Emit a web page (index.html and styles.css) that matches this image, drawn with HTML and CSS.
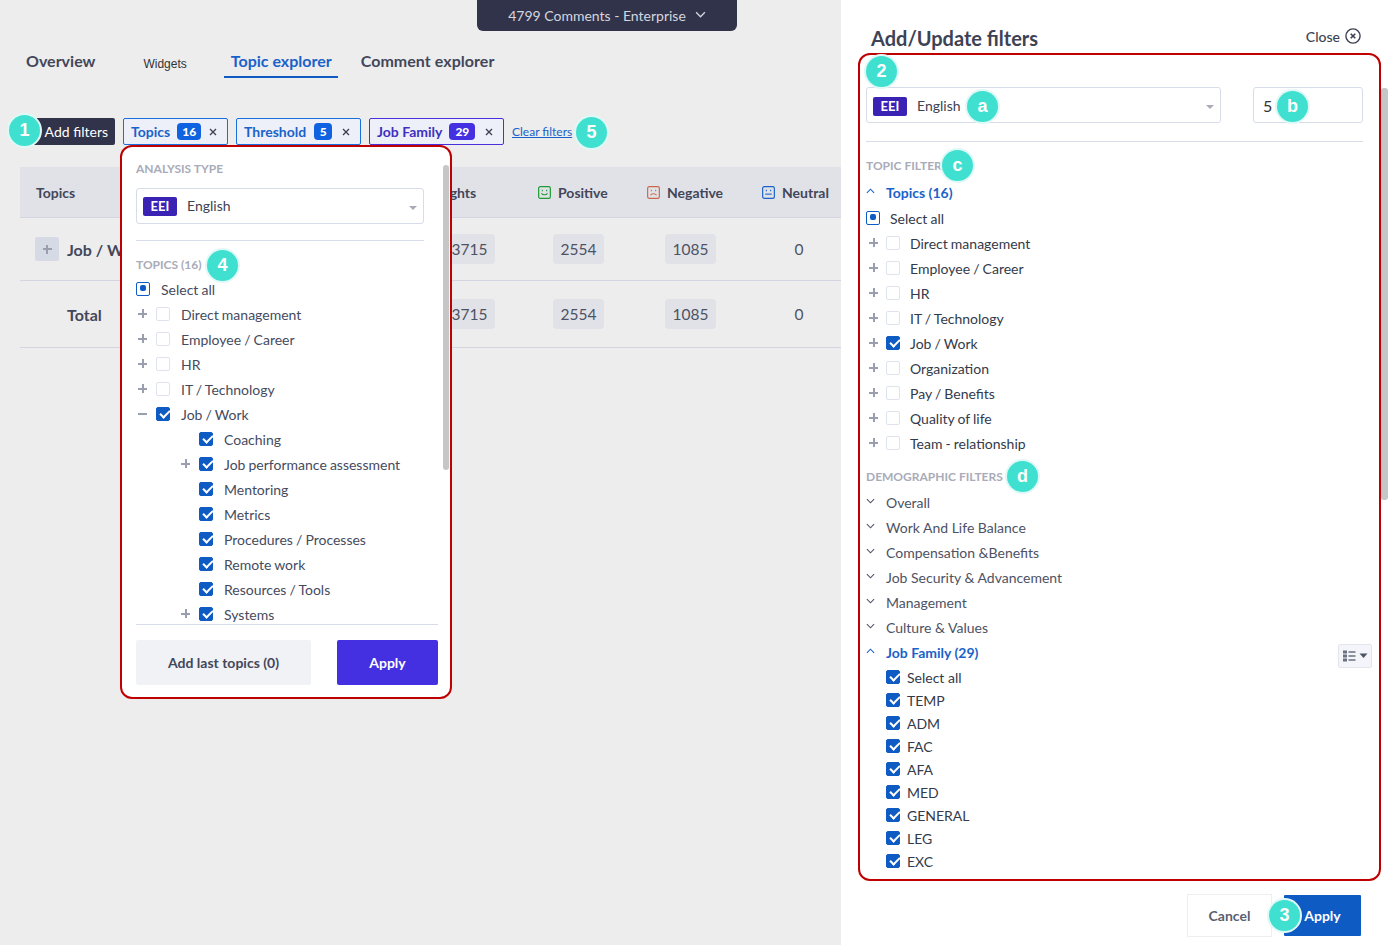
FILE: index.html
```html
<!DOCTYPE html>
<html lang="en">
<head>
<meta charset="utf-8">
<title>Topic explorer</title>
<link rel="stylesheet" href="styles.css">
</head>
<body>
<svg class="defs" width="0" height="0" aria-hidden="true">
  <symbol id="chev-up" viewBox="0 0 10 6"><path d="M1 5l4-4 4 4" fill="none" stroke="currentColor" stroke-width="1.2"/></symbol>
  <symbol id="chev-down" viewBox="0 0 10 6"><path d="M1 1l4 4 4-4" fill="none" stroke="currentColor" stroke-width="1.2"/></symbol>
  <symbol id="x" viewBox="0 0 8 8"><path d="M1 1l6 6M7 1L1 7" fill="none" stroke="currentColor" stroke-width="1.3"/></symbol>
</svg>
<div class="app">
  <main class="left">
    <div class="pill">4799 Comments - Enterprise <svg class="pill-chev"><use href="#chev-down"/></svg></div>
    <nav class="tabs">
      <a class="tab tab-overview">Overview</a>
      <a class="tab tab-widgets">Widgets</a>
      <a class="tab tab-active">Topic explorer</a>
      <a class="tab tab-comment">Comment explorer</a>
    </nav>
    <div class="filters">
      <button class="add-filters">Add filters</button>
      <span class="chip chip-topics">Topics <b class="count">16</b><svg class="chip-x"><use href="#x"/></svg></span>
      <span class="chip chip-threshold">Threshold <b class="count">5</b><svg class="chip-x"><use href="#x"/></svg></span>
      <span class="chip chip-family">Job Family <b class="count">29</b><svg class="chip-x"><use href="#x"/></svg></span>
      <a class="clear">Clear filters</a>
    </div>
    <div class="table">
      <div class="tr th">
        <div class="td td-first">Topics</div>
        <div class="td td-ins">Insights</div>
        <div class="td td-pos">
          <svg class="face" viewBox="0 0 12 12"><rect x=".6" y=".6" width="10.8" height="10.8" rx="1.5" fill="none" stroke="#1f9a35" stroke-width="1.1"/><path d="M4 3.5v1.3M8 3.5v1.3" stroke="#1f9a35"/><path d="M3.2 6.6c1 2 4.6 2 5.6 0" fill="none" stroke="#1f9a35"/></svg>Positive</div>
        <div class="td td-neg">
          <svg class="face" viewBox="0 0 12 12"><rect x=".6" y=".6" width="10.8" height="10.8" rx="1.5" fill="none" stroke="#c9694a" stroke-width="1.1"/><path d="M4 3.5v1.3M8 3.5v1.3" stroke="#c9694a"/><path d="M3.2 8.6c1-2 4.6-2 5.6 0" fill="none" stroke="#c9694a"/></svg>Negative</div>
        <div class="td td-neu">
          <svg class="face" viewBox="0 0 12 12"><rect x=".6" y=".6" width="10.8" height="10.8" rx="1.5" fill="none" stroke="#1a62c9" stroke-width="1.1"/><path d="M4 3.5v1.3M8 3.5v1.3" stroke="#1a62c9"/><path d="M3 7.5h6" stroke="#1a62c9"/></svg>Neutral</div>
      </div>
      <div class="tr row-a">
        <div class="td td-first name"><span class="expand-box"><i class="plus"></i></span>Job / Work</div>
        <div class="td td-num"><span class="val">3715</span></div>
        <div class="td td-num"><span class="val">2554</span></div>
        <div class="td td-num"><span class="val">1085</span></div>
        <div class="td td-num td-zero">0</div>
      </div>
      <div class="tr row-b">
        <div class="td td-first name name-total">Total</div>
        <div class="td td-num"><span class="val">3715</span></div>
        <div class="td td-num"><span class="val">2554</span></div>
        <div class="td td-num"><span class="val">1085</span></div>
        <div class="td td-num td-zero">0</div>
      </div>
    </div>

    <section class="popover">
      <div class="caption cap-first">ANALYSIS TYPE</div>
      <div class="select select-pop"><span class="eei">EEI</span>English<i class="caret"></i></div>
      <hr class="rule rule-pop">
      <div class="caption cap-topics">TOPICS (16)</div>
      <div class="tree">
        <div class="row row-all"><i class="cb mixed"></i>Select all</div>
        <div class="row"><i class="plus"></i><i class="cb"></i>Direct management</div>
        <div class="row"><i class="plus"></i><i class="cb"></i>Employee / Career</div>
        <div class="row"><i class="plus"></i><i class="cb"></i>HR</div>
        <div class="row"><i class="plus"></i><i class="cb"></i>IT / Technology</div>
        <div class="row"><i class="plus minus"></i><i class="cb on"></i>Job / Work</div>
        <div class="row sub"><i class="plus none"></i><i class="cb on"></i>Coaching</div>
        <div class="row sub"><i class="plus"></i><i class="cb on"></i>Job performance assessment</div>
        <div class="row sub"><i class="plus none"></i><i class="cb on"></i>Mentoring</div>
        <div class="row sub"><i class="plus none"></i><i class="cb on"></i>Metrics</div>
        <div class="row sub"><i class="plus none"></i><i class="cb on"></i>Procedures / Processes</div>
        <div class="row sub"><i class="plus none"></i><i class="cb on"></i>Remote work</div>
        <div class="row sub"><i class="plus none"></i><i class="cb on"></i>Resources / Tools</div>
        <div class="row sub"><i class="plus"></i><i class="cb on"></i>Systems</div>
      </div>
      <div class="pop-actions">
        <button class="btn-last">Add last topics (0)</button>
        <button class="btn-apply-pop">Apply</button>
      </div>
      <i class="thumb thumb-pop"></i>
    </section>

    <span class="badge b-1">1</span>
    <span class="badge b-4">4</span>
    <span class="badge b-5">5</span>
  </main>

  <aside class="panel">
    <header class="panel-head">
      <h1>Add/Update filters</h1>
      <a class="close">Close
        <svg class="close-ic" viewBox="0 0 14 14"><circle cx="7" cy="7" r="6.2" fill="none" stroke="#3b3f52" stroke-width="1.2"/><path d="M5 5l4 4M9 5l-4 4" stroke="#3b3f52" stroke-width="1.4"/></svg>
      </a>
    </header>
    <section class="box">
      <div class="box-top">
        <div class="select select-panel"><span class="eei">EEI</span>English<i class="caret"></i></div>
        <div class="num-input">5</div>
      </div>
      <hr class="rule rule-panel">
      <div class="caption cap-tf">TOPIC FILTER</div>
      <div class="acc open"><svg class="chev"><use href="#chev-up"/></svg>Topics (16)</div>
      <div class="tree-p">
        <div class="row row-all"><i class="cb mixed"></i>Select all</div>
        <div class="row"><i class="plus"></i><i class="cb"></i>Direct management</div>
        <div class="row"><i class="plus"></i><i class="cb"></i>Employee / Career</div>
        <div class="row"><i class="plus"></i><i class="cb"></i>HR</div>
        <div class="row"><i class="plus"></i><i class="cb"></i>IT / Technology</div>
        <div class="row"><i class="plus"></i><i class="cb on"></i>Job / Work</div>
        <div class="row"><i class="plus"></i><i class="cb"></i>Organization</div>
        <div class="row"><i class="plus"></i><i class="cb"></i>Pay / Benefits</div>
        <div class="row"><i class="plus"></i><i class="cb"></i>Quality of life</div>
        <div class="row"><i class="plus"></i><i class="cb"></i>Team - relationship</div>
      </div>
      <div class="caption cap-df">DEMOGRAPHIC FILTERS</div>
      <div class="acc"><svg class="chev"><use href="#chev-down"/></svg>Overall</div>
      <div class="acc"><svg class="chev"><use href="#chev-down"/></svg>Work And Life Balance</div>
      <div class="acc"><svg class="chev"><use href="#chev-down"/></svg>Compensation &amp;Benefits</div>
      <div class="acc"><svg class="chev"><use href="#chev-down"/></svg>Job Security &amp; Advancement</div>
      <div class="acc"><svg class="chev"><use href="#chev-down"/></svg>Management</div>
      <div class="acc"><svg class="chev"><use href="#chev-down"/></svg>Culture &amp; Values</div>
      <div class="acc open"><svg class="chev"><use href="#chev-up"/></svg>Job Family (29)
        <span class="view-btn">
          <svg class="view-ic" viewBox="0 0 25 12"><path d="M0 .5h4v3H0zM0 4.500h4v3H0zM0 8.500h4v3H0z" fill="#6b7080"/><path d="M5.500 2h7M5.500 6h7M5.500 10h7" stroke="#6b7080" stroke-width="1.3"/><path d="M16.500 3.500h8l-4 4.500z" fill="#4d5264"/></svg>
        </span>
      </div>
      <div class="family">
        <div class="frow"><i class="cb on"></i>Select all</div>
        <div class="frow"><i class="cb on"></i>TEMP</div>
        <div class="frow"><i class="cb on"></i>ADM</div>
        <div class="frow"><i class="cb on"></i>FAC</div>
        <div class="frow"><i class="cb on"></i>AFA</div>
        <div class="frow"><i class="cb on"></i>MED</div>
        <div class="frow"><i class="cb on"></i>GENERAL</div>
        <div class="frow"><i class="cb on"></i>LEG</div>
        <div class="frow"><i class="cb on"></i>EXC</div>
      </div>
    </section>
    <footer class="panel-foot">
      <button class="btn-cancel">Cancel</button>
      <button class="btn-apply">Apply</button>
    </footer>
    <i class="thumb thumb-panel"></i>
    <span class="badge b-2">2</span>
    <span class="badge b-3">3</span>
    <span class="badge b-a">a</span>
    <span class="badge b-b">b</span>
    <span class="badge b-c">c</span>
    <span class="badge b-d">d</span>
  </aside>
</div>
</body>
</html>
```
FILE: styles.css
```css
* { box-sizing: border-box; }
html, body { margin: 0; padding: 0; }
body { font-family: Lato, "Open Sans", sans-serif; font-size: 14px; color: #454b5e; background: #ededed; }
.defs { position: absolute; }
button { font-family: inherit; border: 0; padding: 0; }
.app { display: flex; width: 1392px; height: 945px; overflow: hidden; }

/* left */
.left { position: relative; width: 841px; flex: none; background: #ededed; overflow: hidden; }
.pill { margin-left: 477px; width: 260px; height: 31px; background: #31334a; border-radius: 0 0 6px 6px; color: #d4d6df; display: flex; align-items: center; justify-content: center; gap: 9px; font-size: 14px; }
.pill-chev { width: 11px; height: 7px; margin-top: -2px; color: #d4d6df; }
.tabs { display: flex; height: 32px; margin-top: 15px; }
.tab { display: block; height: 32px; line-height: 30px; font-size: 16px; font-weight: 700; color: #43475a; }
.tab-overview { margin-left: 26px; }
.tab-widgets { margin-left: 48px; font: 12px/36px "Liberation Sans", Arial, sans-serif; color: #333; }
.tab-active { margin-left: 37px; padding: 0 6px 0 7px; color: #1a62c9; border-bottom: 2px solid #0f5bc4; }
.tab-comment { margin-left: 23px; letter-spacing: 0.05px; }

.filters { display: flex; align-items: center; height: 27px; margin-top: 40px; margin-left: 30px; }
.add-filters { width: 85px; height: 27px; background: #31334a; color: #fff; font-size: 14px; text-align: right; padding-right: 7px; border-radius: 2px; }
.chip { display: flex; align-items: center; height: 27px; border: 1px solid #1a6fe0; border-radius: 2px; background: #edf0f8; color: #1a62c9; font-size: 14px; font-weight: 700; padding-left: 7px; margin-left: 8px; }
.chip-topics { width: 105px; }
.chip-threshold { width: 125px; }
.chip-family { width: 135px; border-color: #4a30dc; color: #3f2fc0; }
.count { display: inline-block; margin-left: 7px; height: 17px; line-height: 17px; min-width: 18px; padding: 0 5px; border-radius: 4px; background: #0f62e0; color: #fff; font-size: 12px; text-align: center; }
.chip-threshold .count { margin-left: 8px; }
.chip-family .count { background: #4430e0; margin-left: 7px; padding: 0 6px; }
.chip-x { width: 8px; height: 8px; margin-left: 8px; color: #3b3f52; }
.chip-threshold .chip-x { margin-left: 10px; }
.chip-family .chip-x { margin-left: 10px; }
.clear { margin-left: 8px; font-size: 12px; color: #1a62c9; text-decoration: underline; }

.table { margin: 22px 0 0 20px; width: 821px; }
.tr { display: grid; grid-template-columns: 394px 111px 107px 117px 92px; border-bottom: 1px solid #d3d6e0; }
.th { height: 51px; background: #e1e2e7; font-weight: 700; color: #43475a; }
.row-a { height: 63px; }
.row-b { height: 67px; }
.td { display: flex; align-items: center; }
.td-first { padding-left: 16px; }
.td-ins { padding-left: 14px; }
.td-pos { padding-left: 13px; }
.td-neg { padding-left: 15px; }
.td-neu { padding-left: 13px; }
.face { width: 13px; height: 13px; margin-right: 7px; flex: none; }
.name { font-size: 16px; font-weight: 700; color: #43475a; padding-left: 15px; }
.name-total { padding-left: 47px; }
.expand-box { position: relative; display: flex; align-items: center; justify-content: center; width: 24px; height: 24px; margin-right: 8px; background: #d6dae5; border-radius: 2px; }
.td-num { justify-content: center; font-size: 15.500px; color: #4d5264; }
.td-zero { padding-left: 8px; }
.val { display: block; height: 30px; line-height: 30px; padding: 0 8px; background: #e1e2e7; border-radius: 4px; }

/* tree glyphs */
.plus { position: relative; display: block; width: 9px; height: 9px; flex: none; }
.plus::before, .plus::after { content: ""; position: absolute; background: #9a9fb0; }
.plus::before { left: 0; top: 3.500px; width: 9px; height: 2px; }
.plus::after { left: 3.500px; top: 0; width: 2px; height: 9px; }
.minus::after, .none::before, .none::after { display: none; }
.cb { position: relative; display: block; width: 14px; height: 14px; flex: none; margin-top: -2px; border: 1px solid #dfe3ee; border-radius: 2px; background: #fff; }
.cb.on { background: #0f5bc4; border-color: #0f5bc4; }
.cb.on::after { content: ""; position: absolute; left: 2.500px; top: 2px; width: 8px; height: 4px; border-left: 2px solid #fff; border-bottom: 2px solid #fff; transform: rotate(-45deg); }
.cb.mixed { border: 1.500px solid #0f5bc4; }
.cb.mixed::after { content: ""; position: absolute; left: 2.500px; top: 2.500px; width: 6px; height: 6px; border-radius: 2px; background: #0f5bc4; }

/* popover */
.popover { position: absolute; left: 120px; top: 145px; width: 332px; height: 554px; padding: 0 12px 0 14px; background: #fff; border: 2px solid #c00000; border-radius: 12px; }
.caption { font-size: 12px; line-height: 16px; font-weight: 700; color: #a9abb8; white-space: nowrap; }
.cap-first { margin-top: 14px; }
.select { display: flex; align-items: center; position: relative; height: 36px; border: 1px solid #d6dce8; border-radius: 3px; background: #fff; font-size: 14px; color: #3d4254; }
.select-pop { width: 288px; margin-top: 11px; padding: 0 0 2px 6px; }
.select-pop .eei { margin-top: 2px; }
.eei { display: block; width: 34px; height: 19px; margin-right: 10px; line-height: 19px; text-align: center; background: #3a22b4; border-radius: 2px; color: #fff; font-size: 13px; font-weight: 700; }
.caret { position: absolute; right: 6px; top: 17px; width: 0; height: 0; border: 4px solid transparent; border-top-color: #a9abb8; border-bottom: 0; }
.rule { display: block; margin: 0; border: 0; border-top: 1px solid #d6dce8; }
.rule-pop { width: 288px; margin-top: 16px; }
.cap-topics { margin-top: 16px; }
.tree { height: 348px; margin-top: 4px; overflow: hidden; border-bottom: 1px solid #d6dce8; }
.row { display: flex; align-items: center; height: 25px; word-spacing: -0.5px; }
.row .plus { margin: -2px 9px 0 2px; }
.row .cb { margin-right: 11px; }
.row-all .cb { margin-right: 11px; }
.sub { padding-left: 45px; }
.sub .plus { margin: -2px 9px 0 0; }
.pop-actions { display: flex; justify-content: space-between; margin-top: 15px; }
.btn-last { width: 175px; height: 45px; background: #f1f2f6; color: #43475a; font-size: 14px; font-weight: 700; border-radius: 2px; }
.btn-apply-pop { width: 101px; height: 45px; background: #4430e0; color: #fff; font-size: 14px; font-weight: 700; border-radius: 2px; }
.thumb { position: absolute; display: block; width: 6px; background: #c6c6c6; border-radius: 3px; }
.thumb-pop { left: 321px; top: 18px; height: 305px; }

/* panel */
.panel { position: relative; flex: 1; background: #fff; }
.panel-head { display: flex; align-items: center; justify-content: space-between; height: 31px; margin-top: 22px; padding: 0 31px 0 30px; }
h1 { margin: 2px 0 0; font-size: 20px; font-weight: 700; color: #3d4254; line-height: 29px; }
.close { display: flex; align-items: center; gap: 5px; padding-bottom: 3px; font-size: 14px; font-weight: 500; color: #3d4254; }
.close-ic { width: 16px; height: 16px; }
.box { width: 523px; height: 828px; margin-left: 17px; padding: 32px 7px 0 6px; border: 2px solid #c00000; border-radius: 12px; background: #fff; overflow: hidden; }
.box-top { display: flex; gap: 32px; width: 497px; }
.select-panel { width: 355px; padding-left: 6px; }
.select-panel .eei { margin-top: 2px; }
.num-input { width: 110px; height: 36px; line-height: 36px; padding-left: 9px; border: 1px solid #d6dce8; border-radius: 3px; font-size: 16px; color: #333; }
.rule-panel { width: 497px; margin-top: 18px; }
.cap-tf { margin-top: 16px; }
.cap-df { margin-top: 13px; }
.acc { display: flex; align-items: center; height: 25px; color: #4d5264; position: relative; }
.cap-tf + .acc { margin-top: 6px; }
.cap-df + .acc { margin-top: 5px; }
.acc.open { color: #1a62c9; font-weight: 700; }
.chev { width: 9px; height: 6px; margin: -3px 11px 0 0; flex: none; color: #4d5264; }
.acc.open .chev { color: #1a62c9; }
.tree-p { margin-top: 1px; }
.tree-p .row { color: #333a4a; }
.tree-p .row .plus { margin: -2px 8px 0 3px; }
.tree-p .row .cb { margin-right: 10px; }
.view-btn { margin-left: auto; margin-top: 6px; display: flex; align-items: center; justify-content: center; width: 34px; height: 24px; background: #f3f5fa; border: 1px solid #e3e6ef; border-radius: 2px; flex: none; }
.view-ic { width: 25px; height: 12px; }
.family { margin-top: 1px; padding-left: 20px; }
.frow { display: flex; align-items: center; height: 23px; color: #333a4a; }
.frow .cb { margin-right: 7px; }
.panel-foot { display: flex; justify-content: flex-end; align-items: center; gap: 12px; margin-top: 13px; padding-right: 31px; }
.btn-cancel { width: 85px; height: 43px; background: #fff; border: 1px solid #eee; color: #5a5f70; font-size: 14px; font-weight: 700; }
.btn-apply { width: 77px; height: 41px; background: #0f5bc4; color: #fff; font-size: 14px; font-weight: 700; border-radius: 1px; text-align: center; }
.thumb-panel { left: 540px; top: 88px; width: 7px; height: 412px; }

/* numbered markers */
.badge { position: absolute; display: flex; align-items: center; justify-content: center; width: 31px; height: 31px; border-radius: 50%; background: #40e0d0; color: #fff; font-size: 18px; font-weight: 700; font-family: "Liberation Sans", Arial, sans-serif; box-shadow: 0 0 0 2px #dff9f6; }
.b-1 { left: 9px; top: 115px; }
.b-4 { left: 207px; top: 250px; }
.b-5 { left: 576px; top: 117px; }
.b-2 { left: 25px; top: 56px; }
.b-3 { left: 428px; top: 900px; }
.b-a { left: 126px; top: 91px; }
.b-b { left: 436px; top: 91px; }
.b-c { left: 101px; top: 150px; }
.b-d { left: 166px; top: 461px; }
```
